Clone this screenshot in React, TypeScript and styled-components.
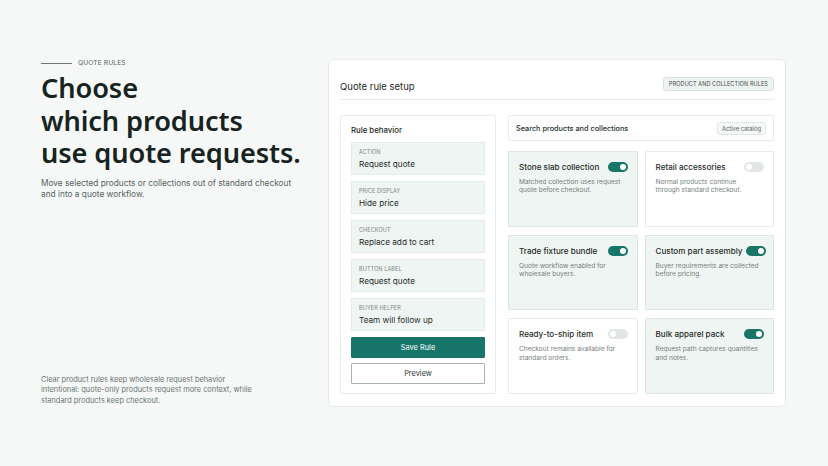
import React from 'react';
import styled, { createGlobalStyle } from 'styled-components';

const GlobalStyle = createGlobalStyle`
    html, body {
        margin: 0;
        padding: 0;
        background: #f6f8f7;
    }
    body {
        font-family: Inter, "Liberation Sans", sans-serif;
        color: #1d2a26;
    }
`;

const Page = styled.div`
    width: 828px;
    height: 466px;
    box-sizing: border-box;
    padding: 59px 42px 59px 41px;
    display: flex;
    gap: 29px;
`;

const Intro = styled.div`
    width: 258px;
    flex-shrink: 0;
    display: flex;
    flex-direction: column;
`;

const Eyebrow = styled.div`
    display: flex;
    align-items: center;
    gap: 6px;
    font-size: 6.7px;
    letter-spacing: 0.1px;
    color: #56625e;
    text-transform: uppercase;
    &::before {
        content: '';
        width: 31px;
        height: 1px;
        background: #6c7874;
    }
`;

const Heading = styled.h1`
    margin: 5px 0 0;
    font-family: "Noto Sans", "Open Sans", sans-serif;
    font-weight: 600;
    font-size: 27.2px;
    line-height: 32.5px;
    letter-spacing: -0.1px;
    color: #17231f;
    white-space: nowrap;
`;

const Lead = styled.p`
    margin: 8px 0 0;
    font-size: 8.3px;
    line-height: 11.5px;
    color: #56625e;
    width: 256px;
`;

const Footnote = styled.p`
    margin: auto 0 0;
    padding-bottom: 1px;
    font-size: 7.4px;
    line-height: 10.5px;
    color: #6a7672;
    width: 214px;
`;

const Panel = styled.div`
    flex: 1;
    min-width: 0;
    background: #ffffff;
    border: 1px solid #e4eae7;
    border-radius: 6px;
    padding: 12px 11px 12px 11px;
    display: flex;
    flex-direction: column;
`;

const PanelHeader = styled.div`
    display: flex;
    align-items: center;
    justify-content: space-between;
    height: 27px;
    border-bottom: 1px solid #e6ece9;
    padding-bottom: 1px;
    margin-bottom: 15px;
`;

const PanelTitle = styled.div`
    font-size: 9.5px;
    color: #1d2a26;
    margin-top: 2px;
`;

const Badge = styled.div`
    font-size: 5.5px;
    letter-spacing: 0.1px;
    text-transform: uppercase;
    color: #3f4c48;
    background: #eef3f1;
    border: 1px solid #d6e0dc;
    border-radius: 3px;
    padding: 3px 5px;
    margin-top: -2px;
`;

const Body = styled.div`
    display: flex;
    gap: 12px;
    flex: 1;
    min-width: 0;
`;

const RuleCard = styled.div`
    width: 156px;
    flex-shrink: 0;
    box-sizing: border-box;
    border: 1px solid #e6ece9;
    border-radius: 2px;
    padding: 9px 10px 9px 10px;
    display: flex;
    flex-direction: column;
    gap: 6px;
`;

const CardTitle = styled.div`
    font-size: 7.8px;
    font-weight: 500;
    color: #1d2a26;
    margin-bottom: 1px;
`;

const Field = styled.div`
    height: 33px;
    box-sizing: border-box;
    background: #eff5f2;
    border: 1px dotted #d8e4df;
    padding: 6px 7px;
    display: flex;
    flex-direction: column;
    gap: 4px;
`;

const FieldLabel = styled.div`
    font-size: 5.5px;
    letter-spacing: 0.1px;
    text-transform: uppercase;
    color: #7c8884;
`;

const FieldValue = styled.div`
    font-size: 8.2px;
    color: #1f2c28;
`;

const Button = styled.button<{ $primary?: boolean }>`
    height: 21px;
    box-sizing: border-box;
    width: 100%;
    font-family: inherit;
    font-size: 7.4px;
    border-radius: 1px;
    cursor: pointer;
    border: 1px solid ${p => (p.$primary ? '#18756a' : '#a7b3af')};
    background: ${p => (p.$primary ? '#18756a' : '#ffffff')};
    color: ${p => (p.$primary ? '#ffffff' : '#2c3834')};
`;

const Catalog = styled.div`
    flex: 1;
    min-width: 0;
    display: flex;
    flex-direction: column;
    gap: 10px;
`;

const SearchBar = styled.div`
    height: 26px;
    box-sizing: border-box;
    border: 1px solid #e6ece9;
    border-radius: 2px;
    display: flex;
    align-items: center;
    justify-content: space-between;
    padding: 0 7px;
    font-size: 7.3px;
    font-weight: 500;
    color: #23302c;
`;

const Chip = styled.div`
    font-size: 5.8px;
    font-weight: 400;
    color: #56625e;
    background: #f5f8f7;
    border: 1px dotted #cdd8d4;
    border-radius: 3px;
    padding: 2px 4px;
`;

const Grid = styled.div`
    flex: 1;
    display: grid;
    grid-template-columns: minmax(0, 1fr) minmax(0, 1fr);
    grid-template-rows: repeat(3, 1fr);
    gap: 8px 7px;
`;

const ProductCard = styled.div<{ $on: boolean }>`
    box-sizing: border-box;
    border: 1px solid ${p => (p.$on ? '#dbe6e1' : '#e6ece9')};
    background: ${p => (p.$on ? '#eff5f2' : '#ffffff')};
    border-radius: 1px;
    padding: 10px 9px 10px 10px;
`;

const ProductHead = styled.div`
    display: flex;
    align-items: center;
    justify-content: space-between;
    gap: 4px;
    margin-bottom: 6px;
`;

const ProductName = styled.div`
    font-size: 8.1px;
    font-weight: 500;
    color: #1f2c28;
    white-space: nowrap;
`;

const ProductNote = styled.div`
    font-size: 6.6px;
    line-height: 8.2px;
    color: #75817d;
    width: 104px;
`;

const Toggle = styled.span<{ $on: boolean }>`
    position: relative;
    width: 20px;
    height: 10px;
    border-radius: 5px;
    background: ${p => (p.$on ? '#18756a' : '#e2e7e5')};
    flex-shrink: 0;
    &::after {
        content: '';
        position: absolute;
        top: 2px;
        ${p => (p.$on ? 'right: 2px;' : 'left: 2px;')}
        width: 6px;
        height: 6px;
        border-radius: 50%;
        background: #ffffff;
    }
`;

const fields = [
    { label: 'Action', value: 'Request quote' },
    { label: 'Price display', value: 'Hide price' },
    { label: 'Checkout', value: 'Replace add to cart' },
    { label: 'Button label', value: 'Request quote' },
    { label: 'Buyer helper', value: 'Team will follow up' },
];

const products = [
    { name: 'Stone slab collection', note: 'Matched collection uses request quote before checkout.', on: true },
    { name: 'Retail accessories', note: 'Normal products continue through standard checkout.', on: false },
    { name: 'Trade fixture bundle', note: 'Quote workflow enabled for wholesale buyers.', on: true },
    { name: 'Custom part assembly', note: 'Buyer requirements are collected before pricing.', on: true },
    { name: 'Ready-to-ship item', note: 'Checkout remains available for standard orders.', on: false },
    { name: 'Bulk apparel pack', note: 'Request path captures quantities and notes.', on: true },
];

export default function App() {
    return (
        <>
            <GlobalStyle />
            <Page>
                <Intro>
                    <Eyebrow>Quote rules</Eyebrow>
                    <Heading>
                        Choose
                        <br />
                        which products
                        <br />
                        use quote requests.
                    </Heading>
                    <Lead>Move selected products or collections out of standard checkout and into a quote workflow.</Lead>
                    <Footnote>
                        Clear product rules keep wholesale request behavior intentional: quote-only products request more context, while standard products keep checkout.
                    </Footnote>
                </Intro>
                <Panel>
                    <PanelHeader>
                        <PanelTitle>Quote rule setup</PanelTitle>
                        <Badge>Product and collection rules</Badge>
                    </PanelHeader>
                    <Body>
                        <RuleCard>
                            <CardTitle>Rule behavior</CardTitle>
                            {fields.map(f => (
                                <Field key={f.label}>
                                    <FieldLabel>{f.label}</FieldLabel>
                                    <FieldValue>{f.value}</FieldValue>
                                </Field>
                            ))}
                            <Button $primary>Save Rule</Button>
                            <Button style={{ marginTop: -1 }}>Preview</Button>
                        </RuleCard>
                        <Catalog>
                            <SearchBar>
                                Search products and collections
                                <Chip>Active catalog</Chip>
                            </SearchBar>
                            <Grid>
                                {products.map(p => (
                                    <ProductCard key={p.name} $on={p.on}>
                                        <ProductHead>
                                            <ProductName>{p.name}</ProductName>
                                            <Toggle $on={p.on} />
                                        </ProductHead>
                                        <ProductNote>{p.note}</ProductNote>
                                    </ProductCard>
                                ))}
                            </Grid>
                        </Catalog>
                    </Body>
                </Panel>
            </Page>
        </>
    );
}
